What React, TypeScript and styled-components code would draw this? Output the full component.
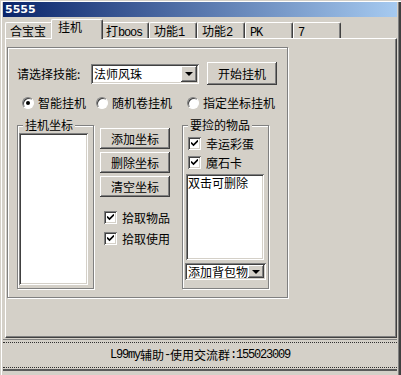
import React from "react";
import styled, { createGlobalStyle, css } from "styled-components";

const Global = createGlobalStyle`
  html, body { margin: 0; padding: 0; background: #d4d0c8; }
  body { font-family: "Noto Sans CJK SC", sans-serif; font-size: 12px; color: #000; }
  * { box-sizing: border-box; }
`;

const sunken = css`
  box-shadow: inset 1px 1px #808080, inset -1px -1px #fff, inset 2px 2px #404040,
    inset -2px -2px #d4d0c8;
`;
const raised = css`
  box-shadow: inset -1px -1px #404040, inset 1px 1px #fff, inset -2px -2px #808080,
    inset 2px 2px #d4d0c8;
`;

const Window = styled.div`
  width: 401px;
  height: 375px;
  background: #d4d0c8;
  padding: 2px 4px 0 3px;
  display: flex;
  flex-direction: column;
  box-shadow: inset 1px 1px #d4d0c8, inset 2px 2px #fff, inset -1px 0 #404040,
    inset -2px 0 #404040, inset -3px 0 #808080;
`;

const TitleBar = styled.div`
  height: 15px;
  background: linear-gradient(90deg, #0a246a 0%, #a6caf0 100%);
  color: #fff;
  font: bold 11px "DejaVu Sans", sans-serif;
  line-height: 15px;
  padding-left: 2px;
`;

const Latin = styled.span`
  font-family: "Liberation Mono", monospace;
  font-size: 12px;
  letter-spacing: -1.2px;
`;

const TabControl = styled.div`
  margin: 2px 0 0 2px;
  width: 392px;
  display: flex;
  flex-direction: column;
`;

const TabStrip = styled.div`
  height: 19px;
  display: flex;
  align-items: flex-end;
`;

const Tab = styled.div<{ $active?: boolean }>`
  width: 48px;
  height: 16px;
  padding-left: 4px;
  line-height: 15px;
  white-space: nowrap;
  background: #d4d0c8;
  border-left: 1px solid #fff;
  border-top: 1px solid #fff;
  border-right: 1px solid #404040;
  border-top-left-radius: 2px;
  border-top-right-radius: 2px;
  box-shadow: inset -1px 0 #808080;
  ${(p) =>
    p.$active &&
    css`
      width: 52px;
      height: 20px;
      margin: 0 -2px -1px -2px;
      padding-left: 6px;
      line-height: 14px;
      position: relative;
      z-index: 1;
    `}
`;

const Panel = styled.div`
  height: 300px;
  border-left: 1px solid #fff;
  border-top: 1px solid #fff;
  border-right: 1px solid #404040;
  border-bottom: 1px solid #404040;
  box-shadow: inset -1px -1px #808080;
  padding: 8px 0 0 1px;
`;

const Page = styled.div`
  width: 281px;
  height: 251px;
  border: 1px solid #808080;
  box-shadow: inset 1px 1px #fff, 1px 1px #fff;
  padding: 14px 0 0 9px;
  display: flex;
  flex-direction: column;
`;

const SkillRow = styled.div`
  height: 23px;
  display: flex;
  align-items: center;
`;

const Label = styled.div`
  width: 74px;
  line-height: 14px;
`;

const Combo = styled.div<{ $w: number; $h: number }>`
  width: ${(p) => p.$w}px;
  height: ${(p) => p.$h}px;
  background: #fff;
  ${sunken};
  padding: 2px;
  display: flex;
  align-items: stretch;
`;

const ComboText = styled.div`
  flex: 1;
  overflow: hidden;
  white-space: nowrap;
  padding-left: 1px;
  line-height: 14px;
  display: flex;
  align-items: center;
`;

const ComboButton = styled.div`
  width: 16px;
  flex: none;
  background: #d4d0c8;
  ${raised};
  display: flex;
  align-items: center;
  justify-content: center;
  &::after {
    content: "";
    border-left: 4px solid transparent;
    border-right: 4px solid transparent;
    border-top: 4px solid #000;
    margin-top: 1px;
  }
`;

const Button = styled.div<{ $h?: number }>`
  width: 70px;
  height: ${(p) => p.$h ?? 21}px;
  background: #d4d0c8;
  ${raised};
  display: flex;
  align-items: center;
  justify-content: center;
  line-height: 14px;
`;

const StartButton = styled(Button)`
  margin-left: 8px;
`;

const RadioRow = styled.div`
  margin: 11px 0 0 5px;
  height: 14px;
  display: grid;
  grid-template-columns: 74px 91px auto;
`;

const Option = styled.label`
  display: flex;
  align-items: center;
  gap: 4px;
  line-height: 14px;
  white-space: nowrap;
`;

const Radio = styled.span<{ $on?: boolean }>`
  width: 12px;
  height: 12px;
  border-radius: 50%;
  background: #fff;
  border: 1px solid;
  border-color: #808080 #fff #fff #808080;
  box-shadow: inset 1px 1px #404040;
  display: flex;
  align-items: center;
  justify-content: center;
  &::after {
    content: "";
    width: 4px;
    height: 4px;
    border-radius: 50%;
    background: ${(p) => (p.$on ? "#000" : "transparent")};
  }
`;

const Check = styled.span`
  width: 13px;
  height: 13px;
  flex: none;
  background: #fff;
  ${sunken};
  display: flex;
  align-items: center;
  justify-content: center;
`;

const CheckRow = styled(Option)<{ $mt: number; $ml: number }>`
  gap: 5px;
  height: 13px;
  margin: ${(p) => p.$mt}px 0 0 ${(p) => p.$ml}px;
`;

const GroupsRow = styled.div`
  margin-top: 8px;
  display: flex;
  align-items: flex-start;
`;

const Group = styled.fieldset<{ $w: number }>`
  width: ${(p) => p.$w}px;
  height: 171px;
  margin: 0;
  padding: 0;
  border: 1px solid #808080;
  box-shadow: inset 1px 1px #fff, 1px 1px #fff;
  min-inline-size: 0;
`;

const Legend = styled.legend`
  margin-left: 5px;
  padding: 0 2px;
  line-height: 14px;
  background: #d4d0c8;
`;

const ListBox = styled.div<{ $w: number; $h: number; $mt: number; $ml: number }>`
  width: ${(p) => p.$w}px;
  height: ${(p) => p.$h}px;
  margin: ${(p) => p.$mt}px 0 0 ${(p) => p.$ml}px;
  background: #fff;
  ${sunken};
  padding: 2px 2px;
  line-height: 14px;
`;

const ButtonCol = styled.div`
  width: 70px;
  margin: 10px 12px 0 6px;
  display: flex;
  flex-direction: column;
  gap: 3px;
`;

const ComboSlot = styled.div`
  margin: 3px 0 0 2px;
`;

const StatusBar = styled.div`
  margin-top: 1px;
  height: 32px;
  border-top: 1px solid #808080;
  border-bottom: 2px solid #5a5a5a;
  padding: 2px 0 1px;
`;

const StatusInner = styled.div`
  height: 100%;
  border-top: 1px dotted #303030;
  border-bottom: 1px dotted #303030;
  display: flex;
  align-items: center;
  justify-content: center;
  line-height: 14px;
`;

const CheckMark = () => (
  <svg width="7" height="7" viewBox="0 0 7 7">
    <path d="M0 2.5 L2.5 5 L7 0.5" fill="none" stroke="#000" strokeWidth="1.6" />
  </svg>
);

export default function App() {
  const tabs: React.ReactNode[] = [
    "合宝宝",
    "挂机",
    <>打<Latin>boos</Latin></>,
    <>功能<Latin>1</Latin></>,
    <>功能<Latin>2</Latin></>,
    <Latin>PK</Latin>,
    <Latin>7</Latin>,
  ];
  return (
    <>
      <Global />
      <Window>
        <TitleBar>5555</TitleBar>
        <TabControl>
          <TabStrip>
            {tabs.map((t, i) => (
              <Tab key={i} $active={i === 1}>
                {t}
              </Tab>
            ))}
          </TabStrip>
          <Panel>
            <Page>
              <SkillRow>
                <Label>请选择技能:</Label>
                <Combo $w={108} $h={20}>
                  <ComboText>法师风珠</ComboText>
                  <ComboButton />
                </Combo>
                <StartButton $h={23}>开始挂机</StartButton>
              </SkillRow>
              <RadioRow>
                <Option>
                  <Radio $on />
                  智能挂机
                </Option>
                <Option>
                  <Radio />
                  随机卷挂机
                </Option>
                <Option>
                  <Radio />
                  指定坐标挂机
                </Option>
              </RadioRow>
              <GroupsRow>
                <Group $w={77}>
                  <Legend>挂机坐标</Legend>
                  <ListBox $w={69} $h={152} $mt={1} $ml={1} />
                </Group>
                <ButtonCol>
                  <Button>添加坐标</Button>
                  <Button>删除坐标</Button>
                  <Button>清空坐标</Button>
                  <CheckRow $mt={11} $ml={4}>
                    <Check>
                      <CheckMark />
                    </Check>
                    拾取物品
                  </CheckRow>
                  <CheckRow $mt={5} $ml={4}>
                    <Check>
                      <CheckMark />
                    </Check>
                    拾取使用
                  </CheckRow>
                </ButtonCol>
                <Group $w={87}>
                  <Legend>要捡的物品</Legend>
                  <CheckRow $mt={5} $ml={5}>
                    <Check>
                      <CheckMark />
                    </Check>
                    幸运彩蛋
                  </CheckRow>
                  <CheckRow $mt={6} $ml={5}>
                    <Check>
                      <CheckMark />
                    </Check>
                    魔石卡
                  </CheckRow>
                  <ListBox $w={78} $h={86} $mt={5} $ml={3}>
                    双击可删除
                  </ListBox>
                  <ComboSlot>
                    <Combo $w={81} $h={17}>
                      <ComboText>添加背包物</ComboText>
                      <ComboButton />
                    </Combo>
                  </ComboSlot>
                </Group>
              </GroupsRow>
            </Page>
          </Panel>
        </TabControl>
        <StatusBar>
          <StatusInner>
            <Latin>L99my</Latin>辅助<Latin>-</Latin>使用交流群<Latin>:155023009</Latin>
          </StatusInner>
        </StatusBar>
      </Window>
    </>
  );
}
